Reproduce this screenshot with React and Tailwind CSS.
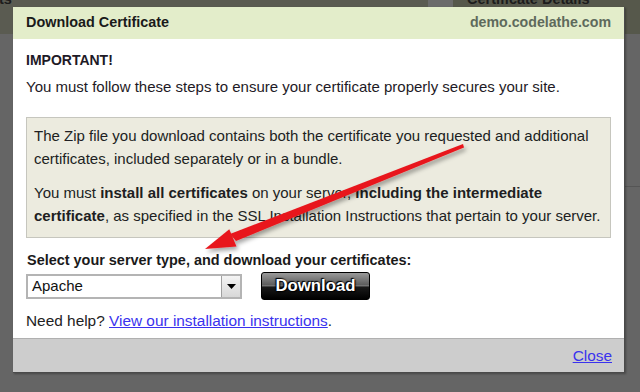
import React from "react";

export default function App() {
  return (
    <div className="relative w-[640px] h-[392px] overflow-hidden bg-[#656565] font-['Liberation_Sans',Arial,sans-serif]">
      {/* dimmed page behind the dialog */}
      <div className="flex flex-col h-full">
        <div className="flex h-[34px] bg-[#5a5b51]">
          <div className="w-[428px] overflow-hidden">
            <div className="mt-[-9px] ml-[-1px] text-[14.5px] leading-[16px] font-bold text-[#1c1c1c]">ts</div>
          </div>
          <div className="w-[25px] bg-[#6b6b6b]" />
          <div className="flex-1 bg-[#56584b] overflow-hidden">
            <div className="mt-[-9px] ml-[14px] text-[14.5px] leading-[16px] font-bold text-[#1c1c1c] whitespace-nowrap">Certificate Details</div>
          </div>
        </div>
        <div className="flex flex-1">
          <div className="flex-1" />
          <div className="w-[15px] flex flex-col">
            <div className="h-[153px] border-b border-[#555]" />
          </div>
        </div>
      </div>

      {/* dialog */}
      <div className="absolute left-[13px] top-[7px] w-[612px] h-[366px] flex flex-col border-r border-b border-[#4a4a4a] shadow-[1px_1px_2px_rgba(0,0,0,0.3)]">
        <div className="h-[32px] bg-[#e3edca] flex items-center justify-between pl-[13px] pr-[13px]">
          <span className="text-[14.4px] font-bold text-[#1a1a1a]">Download Certificate</span>
          <span className="text-[14.2px] font-bold text-[#5e6a5c]">demo.codelathe.com</span>
        </div>
        <div className="flex-1 bg-white px-[13px] text-[#1e1a26]">
          <div className="mt-[11px] text-[14px] leading-[20px] font-bold">IMPORTANT!</div>
          <div className="mt-[7px] text-[15px] leading-[20px]">You must follow these steps to ensure your certificate properly secures your site.</div>
          <div className="mt-[20px] border border-[#c6c6be] bg-[#ecebdf] pl-[7px] pr-[6px] pt-[6px] pb-[10px] text-[15px] leading-[23px] text-[#201e22]">
            <p>The Zip file you download contains both the certificate you requested and additional certificates, included separately or in a bundle.</p>
            <p className="mt-[11px]">You must <b>install all certificates</b> on your server, <b>including the intermediate certificate</b>, as specified in the SSL Installation Instructions that pertain to your server.</p>
          </div>
          <div className="mt-[12px] ml-[1px] text-[14.45px] leading-[20px] font-bold text-[#1a1a1a]">Select your server type, and download your certificates:</div>
          <div className="mt-[2px] flex items-center h-[28px]">
            <div className="w-[216px] h-[25px] border-2 border-[#b4b4b4] flex items-center bg-white">
              <span className="flex-1 pl-[4px] text-[15px] leading-[20px] text-[#111]">Apache</span>
              <div className="w-[19px] h-[21px] border-l border-[#a0a0a0] bg-gradient-to-b from-[#f4f4f4] to-[#d8d8d8] flex items-center justify-center">
                <svg width="9" height="5" viewBox="0 0 9 5"><path d="M0 0H9L4.5 5Z" fill="#000" /></svg>
              </div>
            </div>
            <button className="ml-[19px] w-[109px] h-[28px] rounded-[3px] border border-black bg-[linear-gradient(to_bottom,#9a9a9a_0%,#5c5c5c_46%,#8a8a8a_50%,#1a1a1a_53%,#000_100%)] flex items-center justify-center text-white font-bold text-[16.8px] leading-[20px] [text-shadow:0_0_2px_#000,1px_1px_1px_#000,-1px_-1px_1px_#000]">Download</button>
          </div>
          <div className="mt-[11px] text-[15.4px] leading-[20px] text-[#222]">
            Need help? <a href="#" className="text-[#3a32ee] underline">View our installation instructions</a>.
          </div>
        </div>
        <div className="h-[34px] bg-[#cdcdcd] border-t border-[#b0b0b0] flex items-center justify-end pr-[12px]">
          <a href="#" className="text-[15.4px] text-[#3a32ee] underline">Close</a>
        </div>
      </div>

      {/* red annotation arrow */}
      <svg className="absolute left-0 top-0 pointer-events-none" width="640" height="392" viewBox="0 0 640 392">
        <defs>
          <filter id="sh" x="-20%" y="-20%" width="140%" height="140%">
            <feDropShadow dx="2" dy="3" stdDeviation="2" floodColor="#000" floodOpacity="0.35" />
          </filter>
        </defs>
        <g filter="url(#sh)">
          <path d="M463 144 L464 147.5 L236 241 L230 234 Z" fill="#e8171c" />
          <path d="M205 249 L229.3 229.3 L236.5 246.5 Z" fill="#e8171c" />
        </g>
      </svg>
    </div>
  );
}
